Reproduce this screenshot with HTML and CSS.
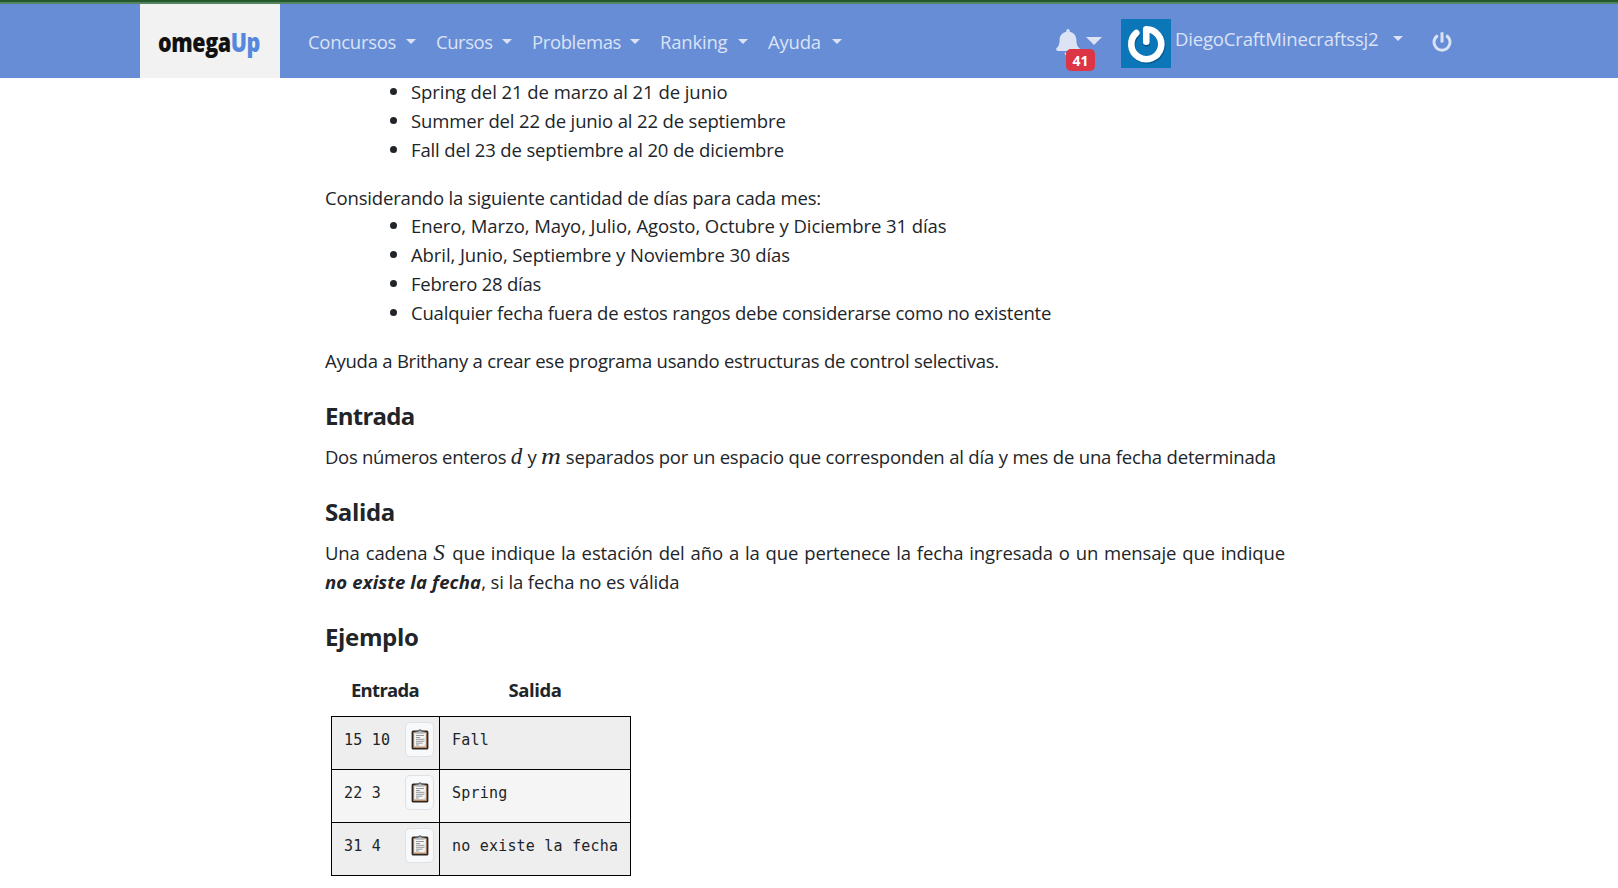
FILE: index.html
```html
<!DOCTYPE html>
<html lang="es">
<head>
<meta charset="utf-8">
<title>omegaUp</title>
<link rel="stylesheet" href="styles.css">
</head>
<body>
<svg class="defs" aria-hidden="true">
  <symbol id="clip" viewBox="0 0 18 21">
    <rect x=".6" y="1.600" width="16.800" height="18.800" rx="1.500" fill="#2b2725"/>
    <rect x="2.200" y="3" width="13.600" height="16" rx=".6" fill="#b98a62"/>
    <rect x="3.200" y="4" width="11.600" height="13.500" fill="#f3f4f5"/>
    <path d="M15 14.500v3h-3z" fill="#d3d3d5"/>
    <path d="M4.500 4.700V2.900q0-1 1.200-1h1.500q0-1.500 1.800-1.500t1.800 1.500h1.500q1.200 0 1.200 1v1.800z" fill="#b4b5b7"/>
    <path d="M5 2.300h2.300q.2-1.400 1.700-1.400t1.700 1.400H13" fill="none" stroke="#444" stroke-width=".9"/>
    <path d="M5 6.500h8M5 8.500h4M5 10.300h8.500M5 12.300h8.500M5 14.200h6.500M5 16h3" stroke="#8d9094" stroke-width=".9"/>
  </symbol>
</svg>
<div class="strip"></div>
<nav class="navbar">
  <a class="brand"><span class="logo">omega<span class="up">Up</span></span></a>
  <ul class="menu">
    <li class="w-con"><span>Concursos</span><i class="caret"></i></li>
    <li class="w-cur"><span>Cursos</span><i class="caret"></i></li>
    <li class="w-pro"><span>Problemas</span><i class="caret"></i></li>
    <li class="w-ran"><span>Ranking</span><i class="caret"></i></li>
    <li class="w-ayu"><span>Ayuda</span><i class="caret"></i></li>
  </ul>
  <div class="user">
    <div class="bell">
      <svg width="24" height="27" viewBox="0 0 448 512"><path fill="#dbe3f5" d="M224 512c35.320 0 63.970-28.650 63.970-64H160.030c0 35.350 28.650 64 63.970 64zm215.390-149.710c-19.320-20.760-55.470-51.990-55.470-154.290 0-77.700-54.480-139.900-127.940-155.160V32c0-17.670-14.320-32-31.980-32s-31.980 14.330-31.980 32v20.840C118.560 68.100 64.080 130.300 64.080 208c0 102.300-36.150 133.530-55.470 154.290-6 6.450-8.660 14.160-8.610 21.710.11 16.400 12.980 32 32.100 32h383.800c19.120 0 32-15.600 32.100-32 .05-7.550-2.610-15.270-8.610-21.710z"/></svg>
      <i class="caret big"></i>
      <span class="badge">41</span>
    </div>
    <svg class="avatar" width="50" height="49" viewBox="0 0 50 49">
      <rect width="50" height="49" fill="#0b76b8"/>
      <g fill="none" stroke-linecap="round" stroke-linejoin="round">
        <path d="M15.500 14.500A15 15 0 1 0 25.300 10.500V23.500" stroke="#075a91" stroke-width="6.600" transform="translate(.5 1)"/>
        <path d="M15.300 14A15 15 0 1 0 25.300 10.200V22.800" stroke="#fff" stroke-width="6.600"/>
      </g>
    </svg>
    <span class="name">DiegoCraftMinecraftssj2</span><i class="caret name-caret"></i>
    <svg class="power" width="20" height="20" viewBox="0 0 20 20"><path d="M5.800 3.400A8 8 0 1 0 14.200 3.400" fill="none" stroke="#dbe3f5" stroke-width="2.900"/><path d="M10 .3v10.200" stroke="#dbe3f5" stroke-width="3"/></svg>
  </div>
</nav>
<main>
  <ul class="list">
    <li class="l-spring">Spring del 21 de marzo al 21 de junio</li>
    <li class="l-summer">Summer del 22 de junio al 22 de septiembre</li>
    <li class="l-fall">Fall del 23 de septiembre al 20 de diciembre</li>
  </ul>
  <p class="l-cons">Considerando la siguiente cantidad de días para cada mes:</p>
  <ul class="list months">
    <li class="l-enero">Enero, Marzo, Mayo, Julio, Agosto, Octubre y Diciembre 31 días</li>
    <li class="l-abril">Abril, Junio, Septiembre y Noviembre 30 días</li>
    <li class="l-feb">Febrero 28 días</li>
    <li class="l-cual">Cualquier fecha fuera de estos rangos debe considerarse como no existente</li>
  </ul>
  <p class="l-ayuda">Ayuda a Brithany a crear ese programa usando estructuras de control selectivas.</p>
  <h3 class="h-ent">Entrada</h3>
  <p class="l-sep"><span class="l-dos">Dos números enteros</span> <span class="math m-d">d</span> y <span class="math m-m"><span class="wide">m</span></span> separados por un espacio que corresponden al día y mes de una fecha determinada</p>
  <h3>Salida</h3>
  <p class="just">Una cadena <span class="math m-s">S</span> que indique la estación del año a la que pertenece la fecha ingresada o un mensaje que indique <b>no existe la fecha</b>, si la fecha no es válida</p>
  <h3>Ejemplo</h3>
  <table>
    <thead><tr><th class="t-ent">Entrada</th><th>Salida</th></tr></thead>
    <tbody>
      <tr><td><div class="in"><pre>15 10</pre><button><svg width="18" height="21"><use href="#clip"/></svg></button></div></td><td><pre>Fall</pre></td></tr>
      <tr><td><div class="in"><pre>22 3</pre><button><svg width="18" height="21"><use href="#clip"/></svg></button></div></td><td><pre>Spring</pre></td></tr>
      <tr><td><div class="in"><pre>31 4</pre><button><svg width="18" height="21"><use href="#clip"/></svg></button></div></td><td><pre>no existe la fecha</pre></td></tr>
    </tbody>
  </table>
</main>
</body>
</html>
```
FILE: styles.css
```css
* { box-sizing: border-box; }
body {
  margin: 0;
  height: 888px;
  overflow: hidden;
  background: #fff;
  color: #212529;
  font: 18.5px/29px "Open Sans", "Noto Sans", sans-serif;
  font-variant-ligatures: none;
}
ul { list-style: none; margin: 0; padding: 0; }
p, h3, pre { margin: 0; }
.defs { display: block; width: 0; height: 0; }

.strip { height: 4px; background: #245a2b; border-bottom: 2px solid #558560; }
.navbar {
  display: flex;
  height: 74px;
  padding: 0 166px 0 140px;
  background: #678dd7;
  color: #dbe3f5;
}
.brand {
  display: flex;
  align-items: center;
  width: 140px;
  padding: 2px 0 0 18px;
  background: #f2f2f2;
}
.logo {
  color: #111;
  font: 800 26px/36px "Open Sans", sans-serif;
  letter-spacing: -.5px;
  white-space: nowrap;
  transform: scaleX(.825);
  transform-origin: 0 50%;
}
.up { color: #5588dd; }

.menu { display: flex; padding: 23px 0 0 28px; }
.menu li { display: flex; }
.menu span { flex: none; white-space: nowrap; }
.menu .caret { margin: 12px 20px 0 auto; }
.menu .w-con { width: 128px; letter-spacing: -.29px; }
.menu .w-cur { width: 96px; letter-spacing: -.47px; }
.menu .w-pro { width: 128px; letter-spacing: -.38px; }
.menu .w-ran { width: 108px; letter-spacing: -.2px; }
.menu .w-ayu { width: 94px; letter-spacing: -.2px; }
.caret {
  width: 10px;
  height: 5px;
  background: #dbe3f5;
  clip-path: polygon(0 0, 100% 0, 50% 100%);
}
.caret.big { width: 16px; height: 8px; margin: 8px 0 0 6px; }

.user { display: flex; align-items: flex-start; margin-left: auto; padding-top: 15px; }
.bell { position: relative; display: flex; width: 65px; padding-top: 10px; }
.badge {
  position: absolute;
  left: 10px;
  top: 30px;
  width: 29px;
  height: 22px;
  border-radius: 5px;
  background: #dc3545;
  color: #fff;
  font: bold 14px/23px "Noto Sans", sans-serif;
  text-align: center;
}
.name { margin: 5px 0 0 4px; width: 204px; letter-spacing: -.17px; white-space: nowrap; }
.name-caret { margin: 17px 0 0 14px; }
.power { margin: 13px 0 0 29px; }

main { width: 960px; margin: -1px 0 0 325px; }
.list { padding-left: 86px; margin-bottom: 19px; }
.list li::before {
  content: "";
  float: left;
  width: 7px;
  height: 7px;
  margin: 11px 0 0 -21px;
  border-radius: 50%;
  background: #212529;
}
.months { margin-top: -1px; }
.list li, .l-cons, .l-ayuda, .l-sep { white-space: nowrap; }
.l-spring { letter-spacing: -.05px; }
.l-summer, .l-fall { letter-spacing: -.15px; }
.l-cons { letter-spacing: -.166px; }
.l-enero { letter-spacing: -.074px; }
.l-abril { letter-spacing: -.09px; }
.l-feb { letter-spacing: -.25px; }
.l-cual { letter-spacing: -.203px; }
.l-ayuda { letter-spacing: -.24px; }
.l-sep { letter-spacing: -.185px; }
.l-dos { letter-spacing: -.3px; }
h3 { margin: 26px 0 12px; font-size: 24px; line-height: 29px; font-weight: bold; letter-spacing: -.35px; }
.h-ent { letter-spacing: -.75px; }
.just { text-align: justify; letter-spacing: -.12px; }
.just b { font-style: italic; letter-spacing: .15px; }
.math {
  display: inline-block;
  font: italic 23px/20px "Liberation Serif", serif;
  letter-spacing: 0;
}
.m-d { width: 12px; }
.m-m { width: 20px; }
.wide { display: inline-block; transform: scaleX(1.2); transform-origin: 0 50%; }
.m-s { width: 13px; }

table { margin: 24px 0 0 6px; border-collapse: collapse; }
th { padding: 0 0 12px; height: 41px; letter-spacing: -.4px; }
.t-ent { letter-spacing: -.7px; padding-right: 1px; }
td { height: 53px; padding: 0; border: 1px solid #000; background: #eee; vertical-align: top; }
tr:nth-child(2) td { background: #f5f5f5; }
td:first-child { width: 108px; }
td:last-child { width: 191px; }
pre {
  padding: 9px 0 0 12px;
  font: 15px/29px "DejaVu Sans Mono", monospace;
  letter-spacing: .2px;
}
.in { display: flex; justify-content: space-between; }
button {
  display: flex;
  align-items: center;
  justify-content: center;
  width: 29px;
  height: 35px;
  margin: 5px 5px 0 0;
  padding: 0;
  border: 1px solid #dee2e6;
  border-radius: 5px;
  background: #f8f9fa;
}
```
